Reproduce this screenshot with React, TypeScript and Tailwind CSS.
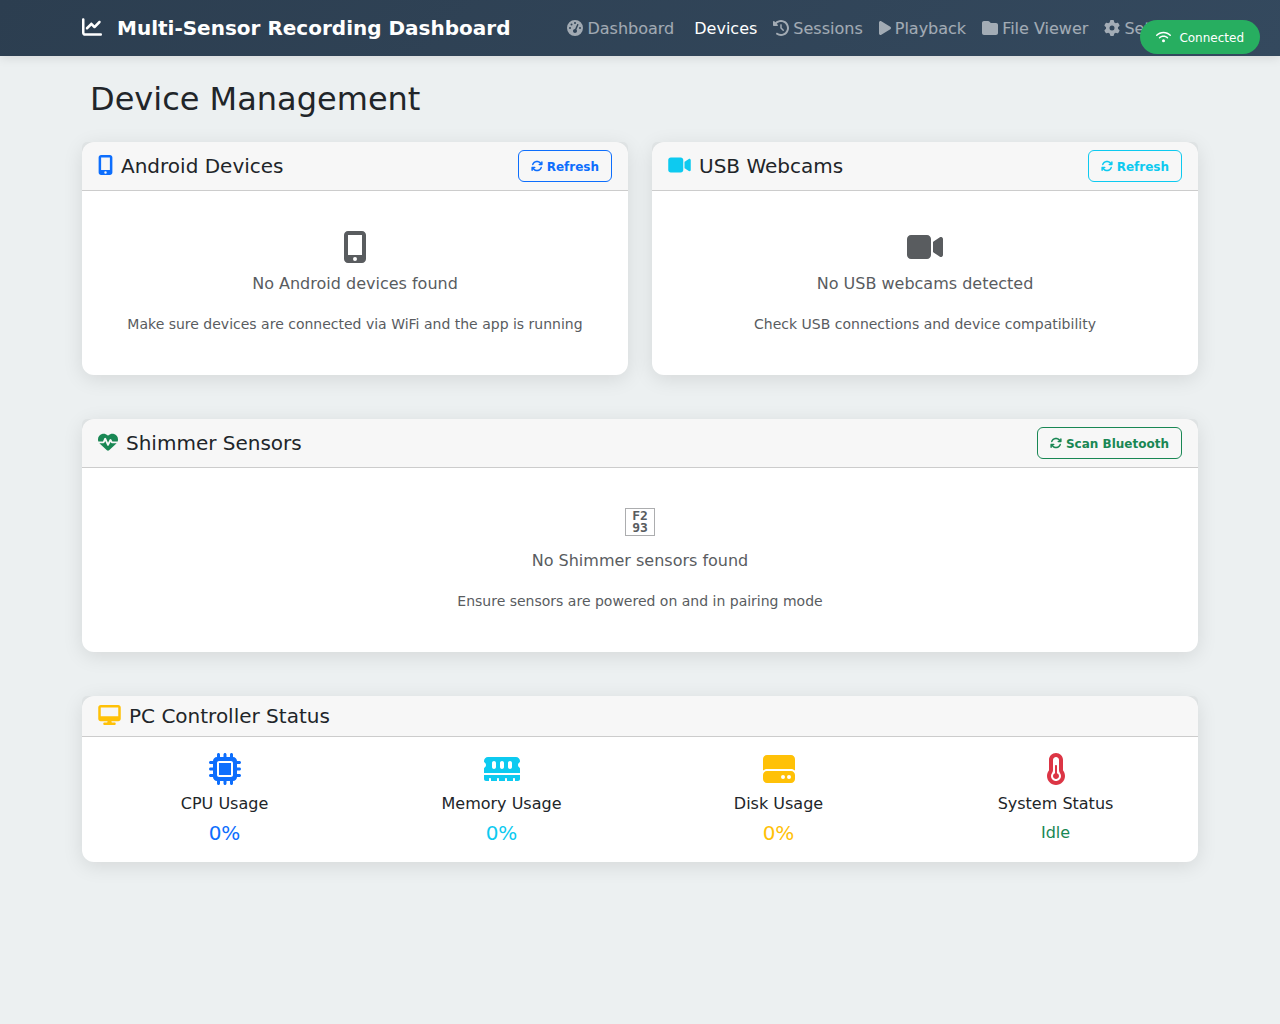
import type { ReactNode } from "react";
import type { IconType } from "react-icons";
import {
  FaArrowsRotate,
  FaChartLine,
  FaClockRotateLeft,
  FaDesktop,
  FaFolder,
  FaGaugeHigh,
  FaGear,
  FaHardDrive,
  FaHeartPulse,
  FaMemory,
  FaMicrochip,
  FaMobileScreenButton,
  FaPlay,
  FaTemperatureHalf,
  FaVideo,
  FaWifi,
} from "react-icons/fa6";

type NavItem = { label: string; icon?: IconType; width?: string; active?: boolean };

const navItems: NavItem[] = [
  { label: "Dashboard", icon: FaGaugeHigh, width: "w-4" },
  { label: "Devices", active: true },
  { label: "Sessions", icon: FaClockRotateLeft, width: "w-4" },
  { label: "Playback", icon: FaPlay, width: "w-3" },
  { label: "File Viewer", icon: FaFolder, width: "w-4" },
  { label: "Settings", icon: FaGear, width: "w-4" },
];

const stats = [
  { label: "CPU Usage", value: "0%", icon: FaMicrochip, width: "w-8", color: "text-[#0d6efd]", size: "text-xl/5" },
  { label: "Memory Usage", value: "0%", icon: FaMemory, width: "w-9", color: "text-[#0dcaf0]", size: "text-xl/5" },
  { label: "Disk Usage", value: "0%", icon: FaHardDrive, width: "w-8", color: "text-[#ffc107]", size: "text-xl/5" },
  {
    label: "System Status",
    value: "Idle",
    icon: FaTemperatureHalf,
    width: "w-5",
    color: "text-[#dc3545]",
    valueColor: "text-[#198754]",
    size: "text-base/5",
  },
];

function Navbar() {
  return (
    <header className="bg-linear-135 from-[#2c3e50] to-[#34495e] shadow-[0_2px_10px_rgba(0,0,0,0.1)]">
      <div className="mx-auto flex h-14 max-w-[1140px] items-center justify-between px-3">
        <a href="#" className="text-xl font-bold whitespace-nowrap text-white">
          <FaChartLine className="mr-[15px] inline-block size-5 align-[-2px]" />
          Multi-Sensor Recording Dashboard
        </a>
        <nav className="flex">
          {navItems.map(({ label, icon: Icon, width, active }) => (
            <a
              key={label}
              href="#"
              aria-current={active ? "page" : undefined}
              className={`px-2 pt-[9px] pb-[7px] whitespace-nowrap ${
                active ? "pl-3 text-white" : "text-white/55"
              }`}
            >
              {Icon && <Icon className={`mr-1 inline-block h-4 align-[-2px] ${width}`} />}
              {label}
            </a>
          ))}
        </nav>
      </div>
    </header>
  );
}

function Card({
  title,
  icon: Icon,
  iconStyle,
  action,
  children,
}: {
  title: string;
  icon: IconType;
  iconStyle: string;
  action?: { label: string; style: string };
  children: ReactNode;
}) {
  return (
    <section className="rounded-xl bg-white shadow-[0_4px_20px_rgba(0,0,0,0.1)]">
      <div className="flex items-center justify-between rounded-t-[5px] border-b border-black/[0.175] bg-black/[0.03] px-4 py-2">
        <h2 className="text-xl/6">
          <Icon className={`mr-2 inline-block h-5 align-[-2px] ${iconStyle}`} />
          {title}
        </h2>
        {action && (
          <button
            type="button"
            className={`h-8 rounded-md border px-3 pt-0.5 text-xs font-bold ${action.style}`}
          >
            <FaArrowsRotate className="mr-1 inline-block size-3 align-[-1px]" />
            {action.label}
          </button>
        )}
      </div>
      {children}
    </section>
  );
}

function EmptyState({ icon, message, hint }: { icon: ReactNode; message: string; hint: string }) {
  return (
    <div className="flex flex-col items-center px-4 pt-10 pb-[39px] text-center text-[#595c5f]">
      <div className="mb-[9px] h-8">{icon}</div>
      <p className="mb-4 text-base/6">{message}</p>
      <p className="text-sm/6">{hint}</p>
    </div>
  );
}

/** Box holding the code point of a symbol that has no glyph. */
function CodePointBox() {
  return (
    <div
      aria-hidden="true"
      className="flex h-7 w-[30px] items-center justify-center border border-[#595c5f]/50 font-['DejaVu_Sans_Mono',monospace] text-[13px]/3 font-bold"
    >
      <span className="w-4 break-all">F293</span>
    </div>
  );
}

export default function App() {
  return (
    <div className="min-h-screen bg-[#ecf0f1] font-['DejaVu_Sans',sans-serif] text-base text-[#212529]">
      <Navbar />
      <div
        role="status"
        className="fixed top-5 right-5 rounded-full bg-[#27ae60] px-4 pt-[9px] pb-[7px] text-xs/[18px] text-white"
      >
        <FaWifi className="mr-2 inline-block h-3 w-[15px] align-[-1px]" />
        Connected
      </div>
      <main className="mx-auto flex max-w-[1140px] flex-col gap-11 px-3 pt-6 pb-11">
        <div>
          <h1 className="mb-6 pl-2 text-[32px]/[38px]">Device Management</h1>
          <div className="grid gap-6 md:grid-cols-2">
            <Card
              title="Android Devices"
              icon={FaMobileScreenButton}
              iconStyle="w-[15px] text-[#0d6efd]"
              action={{ label: "Refresh", style: "border-[#0d6efd] text-[#0d6efd]" }}
            >
              <EmptyState
                icon={<FaMobileScreenButton className="h-8 w-6" />}
                message="No Android devices found"
                hint="Make sure devices are connected via WiFi and the app is running"
              />
            </Card>
            <Card
              title="USB Webcams"
              icon={FaVideo}
              iconStyle="w-[23px] text-[#0dcaf0]"
              action={{ label: "Refresh", style: "border-[#0dcaf0] text-[#0dcaf0]" }}
            >
              <EmptyState
                icon={<FaVideo className="h-8 w-9" />}
                message="No USB webcams detected"
                hint="Check USB connections and device compatibility"
              />
            </Card>
          </div>
        </div>
        <Card
          title="Shimmer Sensors"
          icon={FaHeartPulse}
          iconStyle="w-5 text-[#198754]"
          action={{ label: "Scan Bluetooth", style: "border-[#198754] text-[#198754]" }}
        >
          <EmptyState
            icon={<CodePointBox />}
            message="No Shimmer sensors found"
            hint="Ensure sensors are powered on and in pairing mode"
          />
        </Card>
        <Card title="PC Controller Status" icon={FaDesktop} iconStyle="w-[23px] text-[#ffc107]">
          <div className="grid grid-cols-4 px-1 pt-4 pb-[19px]">
            {stats.map(({ label, value, icon: Icon, width, color, valueColor, size }) => (
              <div key={label} className="flex flex-col items-center gap-[9px] px-3 text-center">
                <Icon className={`h-8 ${width} ${color}`} />
                <h3 className="text-base/5">{label}</h3>
                <p className={`${size} ${valueColor ?? color}`}>{value}</p>
              </div>
            ))}
          </div>
        </Card>
      </main>
    </div>
  );
}
